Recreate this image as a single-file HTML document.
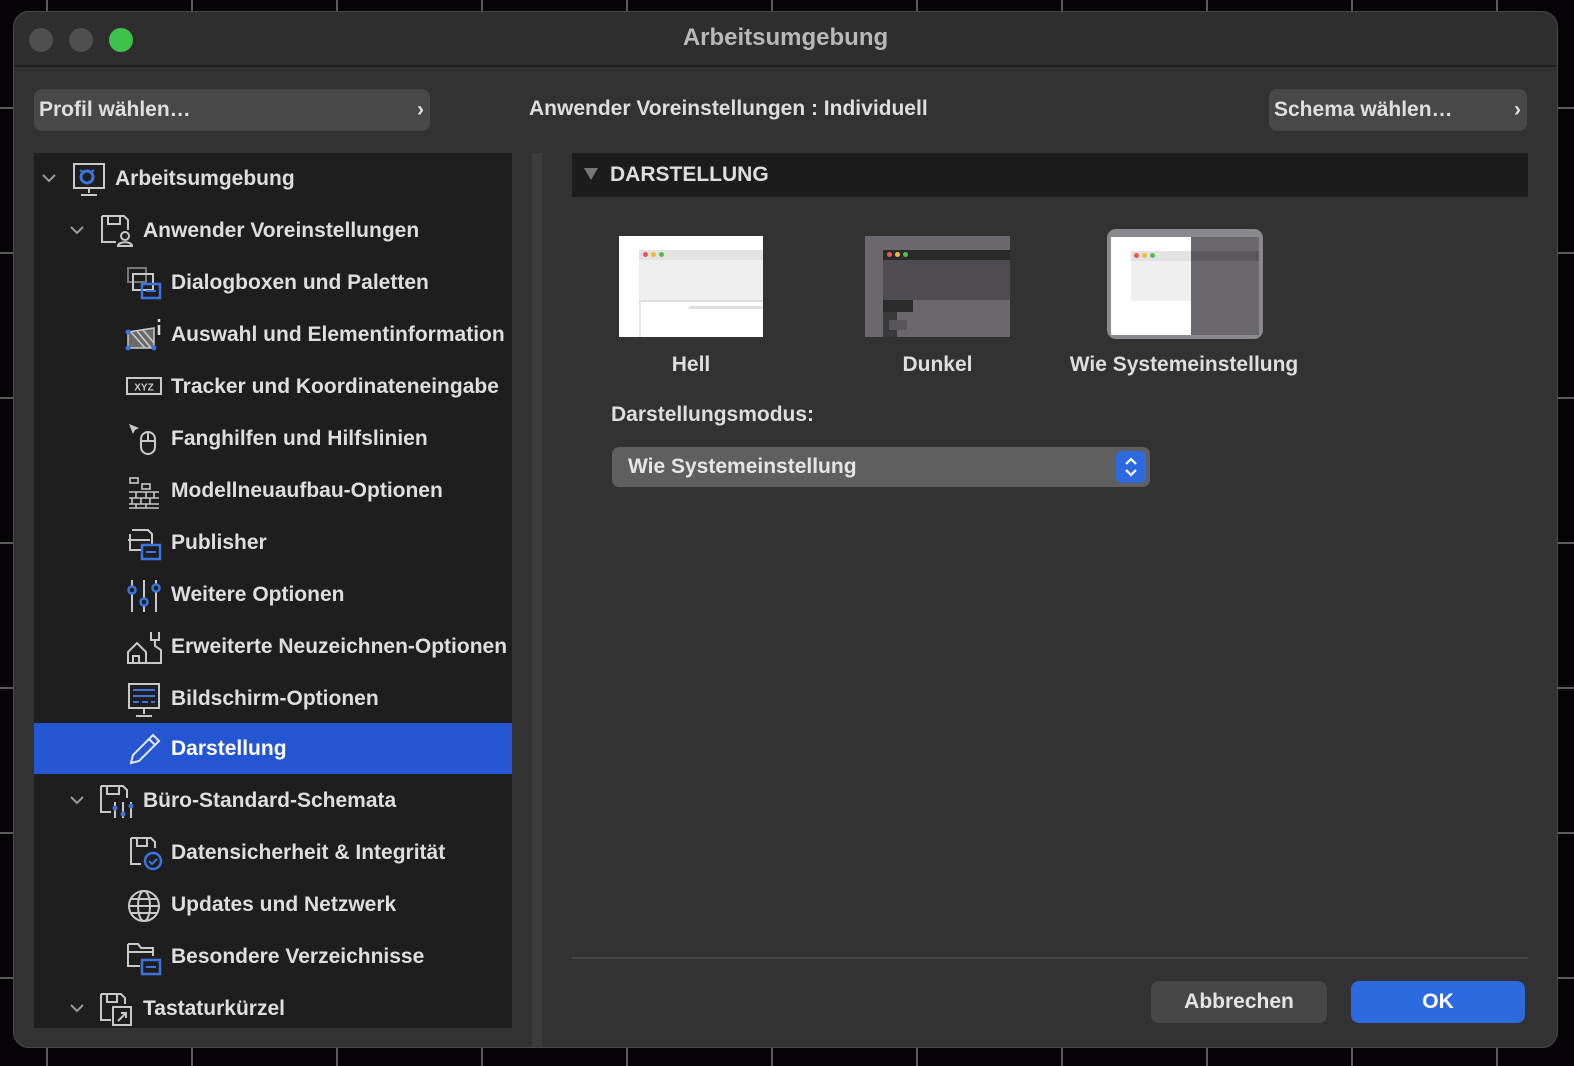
<!DOCTYPE html>
<html><head><meta charset="utf-8">
<style>
*{margin:0;padding:0;box-sizing:border-box}
html,body{width:1574px;height:1066px;overflow:hidden;background:#050306;font-family:"Liberation Sans",sans-serif;color:#dedede;font-weight:bold}
.grid{position:absolute;inset:0;background-image:linear-gradient(90deg,#5a5a5a 2px,transparent 2px),linear-gradient(#5a5a5a 2px,transparent 2px);background-size:145px 145px;background-position:46px 107px}
.win{position:absolute;left:13px;top:11px;width:1545px;height:1037px;background:#323232;border-radius:16px;border:1px solid #4a4a4a;overflow:hidden}
.title{position:absolute;left:0;top:0;right:0;height:55px;background:#2e2e2e;border-bottom:2px solid #1f1f1f;text-align:center;line-height:52px;font-size:24px;font-weight:bold;color:#b8b8b8}
.dot{position:absolute;top:16px;width:24px;height:24px;border-radius:50%;background:#4f4f4f}
.btn{position:absolute;background:#484848;border-radius:8px;font-size:21px;color:#dedede;line-height:42px;padding-left:5px}
.side{position:absolute;left:20px;top:141px;width:478px;height:875px;background:#1e1e1e}
.row{position:absolute;height:52px;font-size:21px;line-height:52px;white-space:nowrap;left:0;right:0;overflow:hidden}
.row svg.ic{position:absolute;top:9px}
.row .tx{position:absolute}
.chev{position:absolute;top:20px}
.sel{background:#2456d2}
.split{position:absolute;left:518px;top:141px;width:10px;height:896px;background:#3c3c3c}
.hdr{position:absolute;left:558px;top:141px;width:956px;height:44px;background:#1c1c1c;font-weight:bold;font-size:21px;line-height:44px;padding-left:38px}
.thumb{position:absolute;overflow:hidden}
.lbl{position:absolute;font-size:21px;font-weight:bold;color:#dedede;text-align:center}
</style></head><body>
<div class="grid"></div>
<div class="win">
 <div class="title">Arbeitsumgebung</div>
 <div class="dot" style="left:15px"></div>
 <div class="dot" style="left:55px"></div>
 <div class="dot" style="left:95px;background:#3fc24a"></div>

 <div class="btn" style="left:20px;top:77px;width:396px;height:42px">Profil wählen…<span style="position:absolute;right:6px;top:0">›</span></div>
 <div style="position:absolute;left:515px;top:85px;font-size:21px">Anwender Voreinstellungen : Individuell</div>
 <div class="btn" style="left:1255px;top:77px;width:258px;height:42px">Schema wählen…<span style="position:absolute;right:6px;top:0">›</span></div>

 <div class="side">
  <div class="row" style="top:0">
   <svg class="chev" width="14" height="10" style="left:8px" viewBox="0 0 14 10"><path d="M1 2l6 6 6-6" stroke="#9a9a9a" stroke-width="2" fill="none"/></svg>
   <svg class="ic" width="34" height="36" style="left:38px" viewBox="0 0 34 36"><rect x="2" y="2" width="30" height="24" fill="none" stroke="#c9c9c9" stroke-width="2"/><path d="M17 26v5M9 33h16" stroke="#c9c9c9" stroke-width="2"/><circle cx="15" cy="15" r="6" fill="none" stroke="#3a74e0" stroke-width="3"/><path d="M8 8l4 3M22 8l-4 3" stroke="#3a74e0" stroke-width="2"/></svg>
   <span class="tx" style="left:81px">Arbeitsumgebung</span></div>
  <div class="row" style="top:52px">
   <svg class="chev" width="14" height="10" style="left:36px" viewBox="0 0 14 10"><path d="M1 2l6 6 6-6" stroke="#9a9a9a" stroke-width="2" fill="none"/></svg>
   <svg class="ic" width="34" height="34" style="left:66px" viewBox="0 0 34 34"><path d="M2 2h22l4 4v10M2 2v26h14" fill="none" stroke="#c9c9c9" stroke-width="2"/><path d="M8 2v8h12V2" fill="none" stroke="#c9c9c9" stroke-width="2"/><circle cx="25" cy="22" r="4" fill="none" stroke="#c9c9c9" stroke-width="2"/><path d="M18 32c0-5 14-5 14 0z" fill="none" stroke="#c9c9c9" stroke-width="2"/></svg>
   <span class="tx" style="left:109px">Anwender Voreinstellungen</span></div>
  <div class="row" style="top:104px">
   <svg class="ic" width="36" height="36" style="left:92px" viewBox="0 0 36 36"><rect x="2" y="2" width="18" height="14" fill="none" stroke="#777" stroke-width="2"/><rect x="7" y="8" width="20" height="16" fill="none" stroke="#c9c9c9" stroke-width="2"/><rect x="16" y="18" width="18" height="14" fill="none" stroke="#3a74e0" stroke-width="2.5"/><path d="M20 25h10" stroke="#3a74e0" stroke-width="2"/></svg>
   <span class="tx" style="left:137px">Dialogboxen und Paletten</span></div>
  <div class="row" style="top:156px">
   <svg class="ic" width="38" height="36" style="left:91px" viewBox="0 0 38 36"><path d="M3 14l26-4v20H3z" fill="#6a6a6a" stroke="#c9c9c9" stroke-width="1.5"/><path d="M6 14l14 16M12 13l14 17M18 12l11 13" stroke="#ccc" stroke-width="1.5"/><circle cx="3" cy="14" r="2.5" fill="#3a74e0"/><circle cx="3" cy="30" r="2.5" fill="#3a74e0"/><circle cx="29" cy="30" r="2.5" fill="#3a74e0"/><path d="M34 1v3M34 7v10" stroke="#ddd" stroke-width="2.5"/></svg>
   <span class="tx" style="left:137px">Auswahl und Elementinformation</span></div>
  <div class="row" style="top:208px">
   <svg class="ic" width="38" height="34" style="left:91px" viewBox="0 0 38 34"><rect x="2" y="8" width="34" height="16" fill="none" stroke="#c9c9c9" stroke-width="2"/><text x="19" y="20.5" font-size="10" font-family="Liberation Sans" font-weight="bold" fill="#c9c9c9" text-anchor="middle">XYZ</text></svg>
   <span class="tx" style="left:137px">Tracker und Koordinateneingabe</span></div>
  <div class="row" style="top:260px">
   <svg class="ic" width="36" height="36" style="left:93px" viewBox="0 0 36 36"><path d="M2 2l10 4-4 2-2 4z" fill="#c9c9c9"/><rect x="14" y="10" width="14" height="22" rx="7" fill="none" stroke="#c9c9c9" stroke-width="2"/><path d="M14 19h14M21 10v9" stroke="#c9c9c9" stroke-width="2"/></svg>
   <span class="tx" style="left:137px">Fanghilfen und Hilfslinien</span></div>
  <div class="row" style="top:312px">
   <svg class="ic" width="36" height="36" style="left:92px" viewBox="0 0 36 36"><path d="M3 18h30M3 24h30M3 30h30M3 34h30M10 18v6M20 18v6M28 18v6M6 24v6M15 24v6M24 24v6M10 30v4M20 30v4" stroke="#c9c9c9" stroke-width="1.6" fill="none"/><rect x="4" y="4" width="8" height="5" fill="none" stroke="#c9c9c9" stroke-width="1.6"/><rect x="16" y="10" width="8" height="5" fill="none" stroke="#c9c9c9" stroke-width="1.6"/></svg>
   <span class="tx" style="left:137px">Modellneuaufbau-Optionen</span></div>
  <div class="row" style="top:364px">
   <svg class="ic" width="36" height="36" style="left:92px" viewBox="0 0 36 36"><path d="M6 4h16l4 4v12M4 8v16h12" fill="none" stroke="#c9c9c9" stroke-width="2"/><path d="M2 14h22" stroke="#c9c9c9" stroke-width="2"/><rect x="16" y="19" width="18" height="14" fill="none" stroke="#3a74e0" stroke-width="2.5"/><path d="M20 26h10" stroke="#3a74e0" stroke-width="2"/></svg>
   <span class="tx" style="left:137px">Publisher</span></div>
  <div class="row" style="top:416px">
   <svg class="ic" width="36" height="36" style="left:92px" viewBox="0 0 36 36"><path d="M6 2v32M18 2v32M30 2v32" stroke="#c9c9c9" stroke-width="2"/><circle cx="6" cy="12" r="3.5" fill="#1e1e1e" stroke="#3a74e0" stroke-width="2.5"/><circle cx="18" cy="24" r="3.5" fill="#1e1e1e" stroke="#3a74e0" stroke-width="2.5"/><circle cx="30" cy="10" r="3.5" fill="#1e1e1e" stroke="#3a74e0" stroke-width="2.5"/></svg>
   <span class="tx" style="left:137px">Weitere Optionen</span></div>
  <div class="row" style="top:468px">
   <svg class="ic" width="38" height="36" style="left:91px" viewBox="0 0 38 36"><path d="M3 33V22l9-9 9 9v11zM8 33v-7h6v7" fill="none" stroke="#c9c9c9" stroke-width="2"/><path d="M22 33h14V20l-6-4V10M26 2v8h8V2" fill="none" stroke="#c9c9c9" stroke-width="2"/></svg>
   <span class="tx" style="left:137px">Erweiterte Neuzeichnen-Optionen</span></div>
  <div class="row" style="top:520px">
   <svg class="ic" width="36" height="36" style="left:92px" viewBox="0 0 36 36"><rect x="3" y="2" width="30" height="24" fill="none" stroke="#c9c9c9" stroke-width="2"/><path d="M7 8h22M7 14h22M7 20h6M16 20h6M25 20h4" stroke="#3a74e0" stroke-width="2"/><path d="M18 26v6M10 34h16" stroke="#c9c9c9" stroke-width="2"/></svg>
   <span class="tx" style="left:137px">Bildschirm-Optionen</span></div>
  <div class="row sel" style="top:570px;height:51px">
   <svg class="ic" width="36" height="36" style="left:93px;top:8px" viewBox="0 0 36 36"><path d="M4 32l2-8L26 4l6 6-20 20z M22 8l6 6" fill="none" stroke="#e8e8e8" stroke-width="2"/></svg>
   <span class="tx" style="left:137px;color:#fff">Darstellung</span></div>
  <div class="row" style="top:622px">
   <svg class="chev" width="14" height="10" style="left:36px" viewBox="0 0 14 10"><path d="M1 2l6 6 6-6" stroke="#9a9a9a" stroke-width="2" fill="none"/></svg>
   <svg class="ic" width="36" height="36" style="left:65px" viewBox="0 0 36 36"><path d="M2 2h22l4 4v8M2 2v26h10" fill="none" stroke="#c9c9c9" stroke-width="2"/><path d="M8 2v8h12V2" fill="none" stroke="#c9c9c9" stroke-width="2"/><path d="M16 18v16M24 18v16M32 18v16" stroke="#c9c9c9" stroke-width="2"/><circle cx="16" cy="24" r="2.5" fill="#3a74e0"/><circle cx="24" cy="30" r="2.5" fill="#3a74e0"/><circle cx="32" cy="22" r="2.5" fill="#3a74e0"/></svg>
   <span class="tx" style="left:109px">Büro-Standard-Schemata</span></div>
  <div class="row" style="top:674px">
   <svg class="ic" width="36" height="36" style="left:95px" viewBox="0 0 36 36"><path d="M2 2h20l4 4v6M2 2v26h10" fill="none" stroke="#c9c9c9" stroke-width="2"/><path d="M8 2v8h10V2" fill="none" stroke="#c9c9c9" stroke-width="2"/><circle cx="24" cy="25" r="8" fill="none" stroke="#3a74e0" stroke-width="2.5"/><path d="M20 25l3 3 5-5" stroke="#3a74e0" stroke-width="2" fill="none"/></svg>
   <span class="tx" style="left:137px">Datensicherheit &amp; Integrität</span></div>
  <div class="row" style="top:726px">
   <svg class="ic" width="36" height="36" style="left:92px" viewBox="0 0 36 36"><circle cx="18" cy="18" r="15" fill="none" stroke="#c9c9c9" stroke-width="2"/><ellipse cx="18" cy="18" rx="6" ry="15" fill="none" stroke="#c9c9c9" stroke-width="2"/><path d="M3 18h30M5 11h26M5 25h26" stroke="#c9c9c9" stroke-width="2"/></svg>
   <span class="tx" style="left:137px">Updates und Netzwerk</span></div>
  <div class="row" style="top:778px">
   <svg class="ic" width="38" height="38" style="left:92px" viewBox="0 0 38 38"><path d="M2 4h10l3 4h12v8M2 4v22h12M2 12h24" fill="none" stroke="#c9c9c9" stroke-width="2"/><rect x="16" y="20" width="18" height="14" fill="none" stroke="#3a74e0" stroke-width="2.5"/><path d="M20 27h10" stroke="#3a74e0" stroke-width="2"/></svg>
   <span class="tx" style="left:137px">Besondere Verzeichnisse</span></div>
  <div class="row" style="top:830px">
   <svg class="chev" width="14" height="10" style="left:36px" viewBox="0 0 14 10"><path d="M1 2l6 6 6-6" stroke="#9a9a9a" stroke-width="2" fill="none"/></svg>
   <svg class="ic" width="36" height="36" style="left:65px" viewBox="0 0 36 36"><path d="M2 2h20l4 4v6M2 2v26h10" fill="none" stroke="#c9c9c9" stroke-width="2"/><path d="M8 2v8h10V2" fill="none" stroke="#c9c9c9" stroke-width="2"/><rect x="14" y="15" width="18" height="18" fill="none" stroke="#c9c9c9" stroke-width="2"/><path d="M19 29l8-8M22 21h5v5" stroke="#c9c9c9" stroke-width="2" fill="none"/></svg>
   <span class="tx" style="left:109px">Tastaturkürzel</span></div>
 </div>
 <div class="split"></div>

 <div class="hdr"><svg width="16" height="14" style="position:absolute;left:11px;top:14px" viewBox="0 0 16 14"><path d="M1 1h14L8 13z" fill="#777"/></svg>DARSTELLUNG</div>

 <div class="thumb" style="left:605px;top:224px;width:144px;height:101px;background:#fff">
  <div style="position:absolute;left:20px;top:14px;right:0;height:10px;background:#e2e2e2"></div>
  <div style="position:absolute;left:24px;top:16px;width:5px;height:5px;border-radius:50%;background:#e55"></div>
  <div style="position:absolute;left:32px;top:16px;width:5px;height:5px;border-radius:50%;background:#eb3"></div>
  <div style="position:absolute;left:40px;top:16px;width:5px;height:5px;border-radius:50%;background:#5b5"></div>
  <div style="position:absolute;left:20px;top:24px;right:0;height:40px;background:#efefef"></div>
  <div style="position:absolute;left:20px;top:64px;right:0;height:2px;background:#ddd"></div>
  <div style="position:absolute;left:20px;top:66px;width:2px;bottom:0;background:#e6e6e6"></div>
  <div style="position:absolute;left:70px;top:70px;right:0;height:3px;background:#e0e0e0"></div>
 </div>
 <div class="thumb" style="left:851px;top:224px;width:145px;height:101px;background:#6a686d">
  <div style="position:absolute;left:18px;top:14px;right:0;height:10px;background:#2a2a2a"></div>
  <div style="position:absolute;left:22px;top:16px;width:5px;height:5px;border-radius:50%;background:#e55"></div>
  <div style="position:absolute;left:30px;top:16px;width:5px;height:5px;border-radius:50%;background:#eb3"></div>
  <div style="position:absolute;left:38px;top:16px;width:5px;height:5px;border-radius:50%;background:#5b5"></div>
  <div style="position:absolute;left:18px;top:24px;right:0;height:40px;background:#4e4c50"></div>
  <div style="position:absolute;left:18px;top:64px;width:30px;height:12px;background:#2b2b2b"></div>
  <div style="position:absolute;left:18px;top:76px;width:14px;bottom:0;background:#3a3a3a"></div>
  <div style="position:absolute;left:24px;top:84px;width:18px;height:10px;background:#58565a"></div>
 </div>
 <div class="thumb" style="left:1093px;top:217px;width:156px;height:110px;background:#8a8a8e;border-radius:9px">
  <div style="position:absolute;left:4px;top:8px;width:80px;height:98px;background:#fff"></div>
  <div style="position:absolute;left:84px;top:8px;width:68px;height:98px;background:#6a686d"></div>
  <div style="position:absolute;left:24px;top:22px;width:60px;height:10px;background:#e2e2e2"></div>
  <div style="position:absolute;left:84px;top:22px;width:68px;height:10px;background:#5a585c"></div>
  <div style="position:absolute;left:27px;top:24px;width:5px;height:5px;border-radius:50%;background:#e55"></div>
  <div style="position:absolute;left:35px;top:24px;width:5px;height:5px;border-radius:50%;background:#eb3"></div>
  <div style="position:absolute;left:43px;top:24px;width:5px;height:5px;border-radius:50%;background:#5b5"></div>
  <div style="position:absolute;left:24px;top:32px;width:60px;height:40px;background:#efefef"></div>
 </div>
 <div class="lbl" style="left:605px;top:341px;width:144px">Hell</div>
 <div class="lbl" style="left:851px;top:341px;width:145px">Dunkel</div>
 <div class="lbl" style="left:1040px;top:341px;width:260px">Wie Systemeinstellung</div>

 <div style="position:absolute;left:597px;top:391px;font-size:21px">Darstellungsmodus:</div>
 <div style="position:absolute;left:598px;top:435px;width:538px;height:40px;background:#5f5f5f;border-radius:7px;font-size:21px;line-height:40px;padding-left:16px;color:#e6e6e6">Wie Systemeinstellung
  <div style="position:absolute;right:4px;top:4px;width:30px;height:32px;background:#2d6ae0;border-radius:6px">
   <svg width="30" height="32" viewBox="0 0 30 32"><path d="M10 13l5-5 5 5M10 19l5 5 5-5" stroke="#fff" stroke-width="2.2" fill="none"/></svg></div>
 </div>

 <div style="position:absolute;left:558px;top:945px;width:956px;height:2px;background:#464646"></div>
 <div style="position:absolute;left:1137px;top:969px;width:176px;height:42px;background:#474747;border-radius:8px;text-align:center;line-height:42px;font-size:21px;color:#e4e4e4">Abbrechen</div>
 <div style="position:absolute;left:1337px;top:969px;width:174px;height:42px;background:#2d6ae0;border-radius:8px;text-align:center;line-height:42px;font-size:21px;color:#fff">OK</div>
</div>
</body></html>
